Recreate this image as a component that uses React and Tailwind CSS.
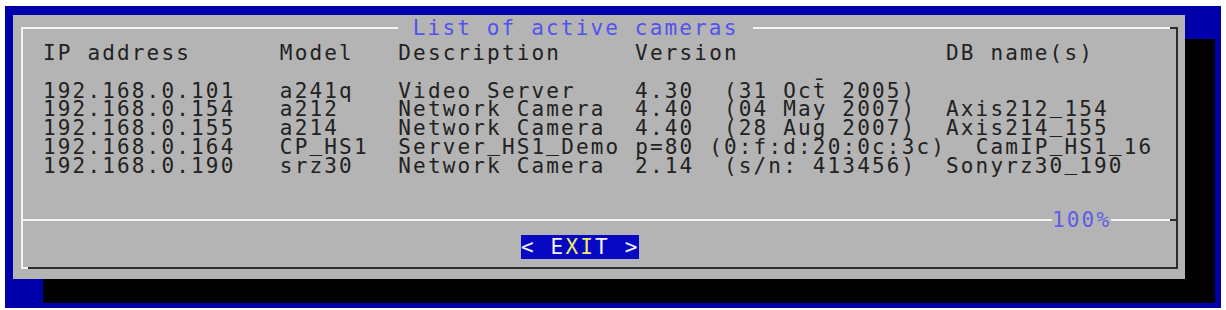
import React from 'react';

const header = 'IP address      Model   Description     Version              DB name(s)';

const rows = [
  '192.168.0.101   a241q   Video Server    4.30  (31 Oct\u0304 2005)',
  '192.168.0.154   a212    Network Camera  4.40  (04 May 2007)  Axis212_154',
  '192.168.0.155   a214    Network Camera  4.40  (28 Aug 2007)  Axis214_155',
  '192.168.0.164   CP_HS1  Server_HS1_Demo p=80 (0:f:d:20:0c:3c)  CamIP_HS1_16',
  '192.168.0.190   srz30   Network Camera  2.14  (s/n: 413456)  Sonyrz30_190',
];

const mono = "font-['DejaVu_Sans_Mono',monospace] text-[21px] tracking-[2.16px]";

// terminal font keeps "_" on the baseline; lift it so it doesn't touch the next row
function Line({ text }) {
  const parts = text.split('_');
  return (
    <div className="h-[18.75px] leading-[18.75px] whitespace-pre text-[#222]">
      {parts.map((p, i) => (
        <React.Fragment key={i}>
          {i > 0 && <span className="leading-[0] align-[3px]">_</span>}
          {p}
        </React.Fragment>
      ))}
    </div>
  );
}

export default function App() {
  return (
    <div className={`w-[1226px] h-[310px] bg-white overflow-hidden ${mono}`}>
      {/* Blue screen */}
      <div className="ml-[5px] mt-[6px] w-[1216px] h-[302px] bg-[#0000aa] pl-[8px] pt-[9px]">
        {/* Dialog */}
        <div className="w-[1172px] h-[264px] bg-[#b4b4b4] shadow-[30px_24px_0_0_#000] pl-[8px] pt-[12px]">
          {/* Frame */}
          <div className="w-[1157px] h-[242px] border-l-2 border-l-[#f4f4f4] border-r-2 border-r-[#2c2c2c] flex flex-col">
            {/* Top edge with title */}
            <div className="h-[2px] flex items-center">
              <div className="w-[375px] h-[2px] bg-[#f4f4f4]" />
              <span className="leading-[24px] whitespace-pre text-[#5252ee]"> List of active cameras </span>
              <div className="flex-1 h-[2px] bg-[#f4f4f4]" />
              <div className="w-[6px] h-[2px] bg-[#2c2c2c]" />
            </div>

            {/* Table */}
            <div className="pl-[20px] pt-[15px]">
              <Line text={header} />
              <Line text=" " />
              {rows.map(r => <Line key={r} text={r} />)}
            </div>

            {/* Separator with progress */}
            <div className="mt-[44px] h-[2px] flex items-center">
              <div className="w-[1029px] h-[2px] bg-[#f4f4f4]" />
              <span className="leading-[24px] whitespace-pre text-[#5e5ee6]">100%</span>
              <div className="flex-1 h-[2px] bg-[#f4f4f4]" />
              <div className="w-[6px] h-[2px] bg-[#2c2c2c]" />
            </div>

            {/* Button */}
            <div className="mt-[11px] pl-[498px]">
              <span className="inline-block h-[24px] leading-[24px] whitespace-pre bg-[#0808c4] text-[#f2f2f2]">
                {'< E'}<span className="text-[#eeee66]">XI</span>{'T >'}
              </span>
            </div>

            {/* Bottom edge */}
            <div className="mt-auto h-[2px] flex">
              <div className="w-[5px] h-[2px] bg-[#f4f4f4]" />
              <div className="flex-1 h-[2px] bg-[#2c2c2c]" />
            </div>
          </div>
        </div>
      </div>
    </div>
  );
}
